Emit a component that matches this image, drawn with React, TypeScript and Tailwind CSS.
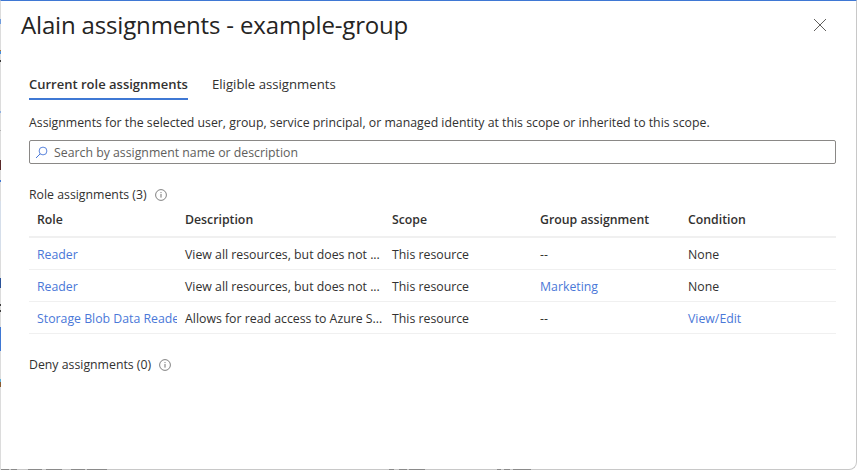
const font = "font-['Open_Sans','Noto_Sans',sans-serif]";

const rows = [
  { role: "Reader", desc: "View all resources, but does not ...", group: "--", groupLink: false, cond: "None", condLink: false },
  { role: "Reader", desc: "View all resources, but does not ...", group: "Marketing", groupLink: true, cond: "None", condLink: false },
  { role: "Storage Blob Data Reader", desc: "Allows for read access to Azure S...", group: "--", groupLink: false, cond: "View/Edit", condLink: true },
];

// bits of the page behind the dialog that show along its left edge
const leftBits = [
  { top: 18, height: 5, color: "#6f9bdc" },
  { top: 49, height: 1, color: "#b5762f" },
  { top: 50, height: 3, color: "#4a8fd8" },
  { top: 59, height: 2, color: "#3a3a3a" },
  { top: 110, height: 2, color: "#8fb0e0" },
  { top: 129, height: 1, color: "#b0b0b0" },
  { top: 159, height: 10, color: "#5a2a2a" },
  { top: 179, height: 2, color: "#3f78d4" },
  { top: 200, height: 50, color: "#d5deea" },
  { top: 277, height: 10, color: "#2a5298" },
  { top: 303, height: 2, color: "#404040" },
  { top: 309, height: 2, color: "#404040" },
  { top: 326, height: 24, color: "#3f78d4" },
  { top: 378, height: 3, color: "#5fb0d8" },
  { top: 381, height: 5, color: "#8a5a30" },
];

// text fragments of the page behind, cut by the bottom edge
const bottomBits = [
  { left: 0, width: 8 }, { left: 10, width: 6 }, { left: 27, width: 14 }, { left: 45, width: 16 },
  { left: 70, width: 14 }, { left: 86, width: 20 }, { left: 388, width: 5 }, { left: 398, width: 8 },
  { left: 408, width: 16 }, { left: 496, width: 4 }, { left: 503, width: 6 }, { left: 512, width: 18 },
];

function InfoIcon() {
  return (
    <svg width="12" height="12" viewBox="0 0 12 12" fill="none" className="shrink-0">
      <circle cx="6" cy="6" r="5.4" stroke="#737373" strokeWidth="0.9" />
      <rect x="5.5" y="5" width="1" height="3.6" fill="#737373" />
      <rect x="5.5" y="3.1" width="1" height="1" fill="#737373" />
    </svg>
  );
}

function Row({ row }: { row: (typeof rows)[number] }) {
  return (
    <div className="grid h-8 grid-cols-[148px_207px_148px_148px_156px] items-center border-b border-[#f0f0f0] pt-[4px] text-[12.3px] text-[#323130]">
      <a className="overflow-hidden whitespace-nowrap pl-2 text-[#4a78d8]">{row.role}</a>
      <div className="whitespace-nowrap pl-2">{row.desc}</div>
      <div className="pl-2">This resource</div>
      <div className={row.groupLink ? "pl-2 text-[#4a78d8]" : "pl-2"}>{row.group}</div>
      <div className={row.condLink ? "pl-2 text-[#4a78d8]" : "pl-2"}>{row.cond}</div>
    </div>
  );
}

export default function App() {
  return (
    <div className={`${font} relative h-[470px] w-[857px] rounded-br-lg border-t border-b border-l border-r border-t-[#3f78d4] border-b-[#c8c8c8] border-l-[#dcdcdc] border-r-[#c8c8c8] bg-white text-[#323130]`}>
      {leftBits.map((b) => (
        <div key={b.top} className="absolute left-[-1px] w-px" style={{ top: b.top, height: b.height, backgroundColor: b.color }} />
      ))}
      {bottomBits.map((b) => (
        <div key={b.left} className="absolute bottom-[-1px] h-px bg-[#8a8a8a]" style={{ left: b.left, width: b.width }} />
      ))}

      <div className="flex items-center justify-between pl-[20px] pr-[28px] pt-[8px]">
        <h1 className="text-[24px] font-medium leading-[32px] tracking-[-0.16px] text-[#252423]">Alain assignments - example-group</h1>
        <svg width="14" height="14" viewBox="0 0 14 14" className="mr-px shrink-0">
          <path d="M1 1L13 13M13 1L1 13" stroke="#605e5c" strokeWidth="1" />
        </svg>
      </div>

      <div className="px-[28px]">
        <div className="mt-[26px] flex gap-6">
          <div className="h-[33px] border-b-2 border-[#3f78d4] pt-[8px] text-[13px] font-semibold">Current role assignments</div>
          <div className="pt-[8px] text-[13.2px]">Eligible assignments</div>
        </div>

        <p className="mt-[14px] whitespace-nowrap text-[12.3px] leading-[18px]">
          Assignments for the selected user, group, service principal, or managed identity at this scope or inherited to this scope.
        </p>

        <div className="mt-[8px] flex h-6 w-[807px] items-center gap-[6px] rounded-[2px] border border-[#8a8886] pl-[5px] text-[12.3px] text-[#605e5c]">
          <svg width="13" height="13" viewBox="0 0 13 13" fill="none" className="shrink-0">
            <circle cx="8" cy="5" r="3.9" stroke="#4a78d8" strokeWidth="0.9" />
            <path d="M5.2 7.8L1 12" stroke="#4a78d8" strokeWidth="1" />
          </svg>
          <span className="pt-[2px]">Search by assignment name or description</span>
        </div>

        <div className="mt-[22px] flex h-[18px] items-center gap-2 text-[12.3px]">
          <span>Role assignments (3)</span>
          <InfoIcon />
        </div>

        <div className="w-[807px]">
          <div className="grid h-[34px] grid-cols-[148px_207px_148px_148px_156px] items-center border-b-2 border-[#f0f0f0] text-[12.3px] font-semibold">
            <div className="pl-2">Role</div>
            <div className="pl-2">Description</div>
            <div className="pl-2">Scope</div>
            <div className="pl-2">Group assignment</div>
            <div className="pl-2">Condition</div>
          </div>
          {rows.map((row, i) => (
            <Row key={i} row={row} />
          ))}
        </div>

        <div className="mt-[22px] flex h-[18px] items-center gap-2 text-[12.3px]">
          <span>Deny assignments (0)</span>
          <InfoIcon />
        </div>
      </div>
    </div>
  );
}
